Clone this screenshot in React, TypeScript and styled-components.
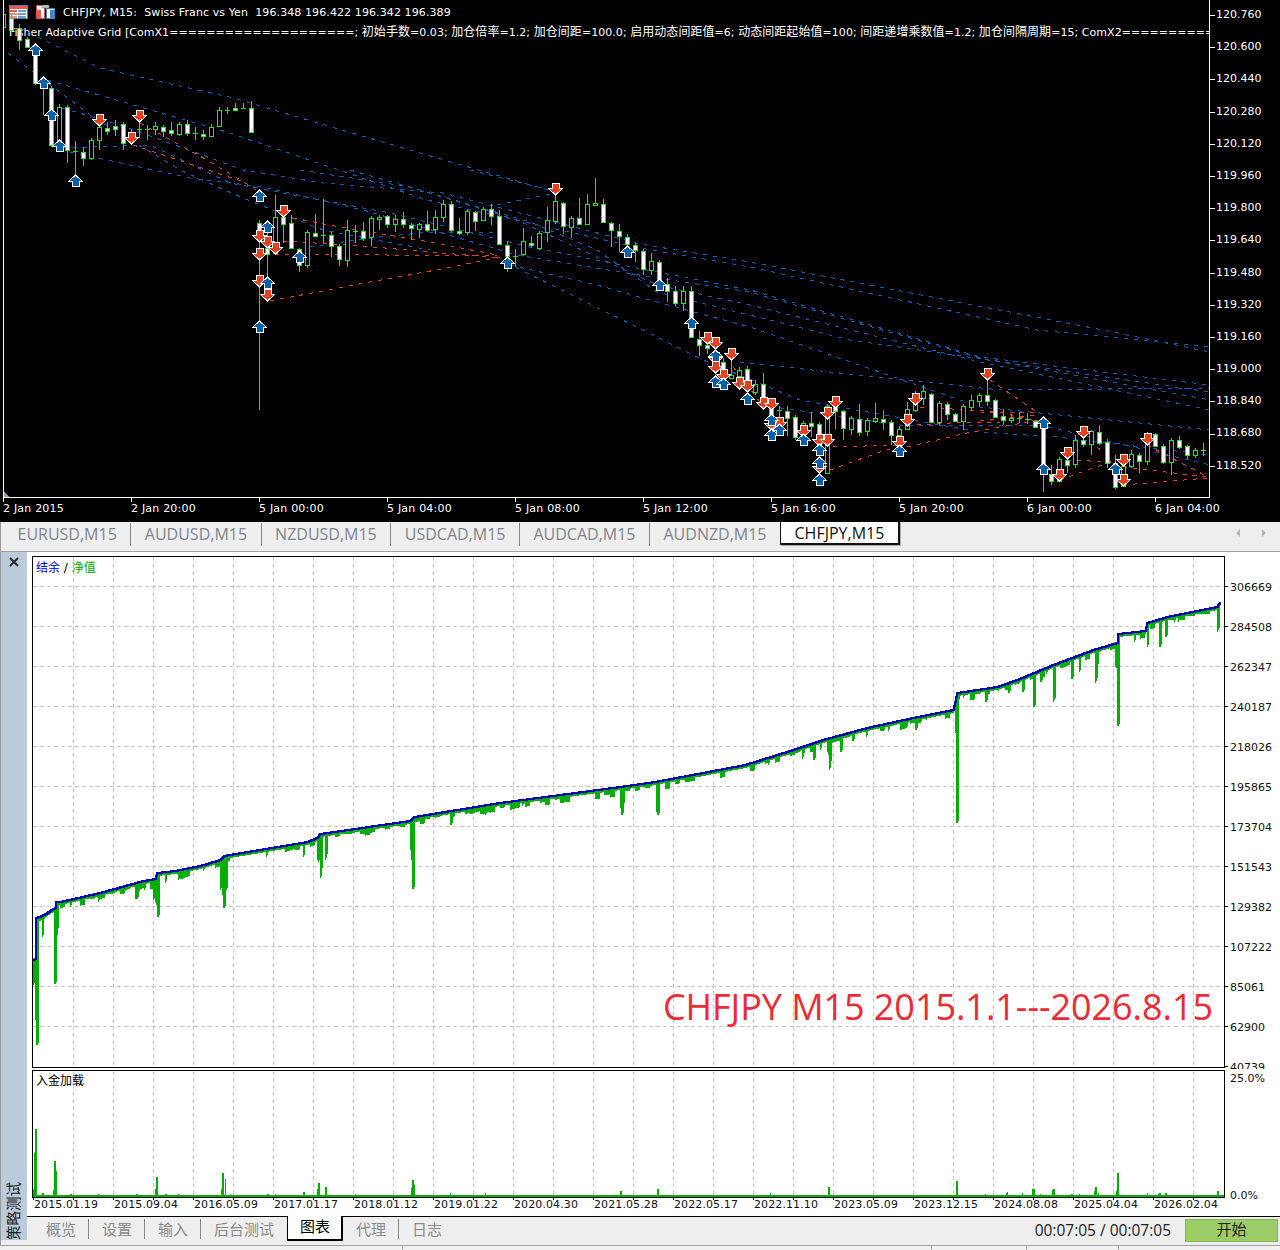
import React from "react";
import styled, { createGlobalStyle } from "styled-components";

const GlobalStyle = createGlobalStyle`
  html, body {
    margin: 0;
    padding: 0;
    background: #fff;
  }
  * {
    box-sizing: border-box;
  }
`;

const UI_FONT = `"DejaVu Sans", "Noto Sans CJK SC", sans-serif`;
const TAB_FONT = `"Open Sans", "Noto Sans CJK SC", sans-serif`;

const Page = styled.div`
  width: 1280px;
  height: 1250px;
  display: flex;
  flex-direction: column;
  overflow: hidden;
  font-family: ${UI_FONT};
`;

/* ---------- price chart ---------- */

const ChartPane = styled.div`
  height: 522px;
  background: #000;
  color: #fff;
  font-size: 11px;
`;

const ChartRow = styled.div`
  display: flex;
  height: 498px;
`;

const Plot = styled.div`
  position: relative;
  margin-left: 3px;
  width: 1207px;
  height: 498px;
  border-left: 1px solid #fff;
  border-right: 1px solid #fff;
  border-bottom: 1px solid #fff;
  overflow: hidden;

  svg {
    position: relative;
    display: block;
  }
`;

const ChartCaption = styled.div`
  position: absolute;
  left: 5px;
  top: 4px;
  white-space: nowrap;
`;

const CaptionTitle = styled.div`
  display: flex;
  align-items: center;
  height: 16px;
  gap: 8px;
  letter-spacing: 0.1px;
  white-space: pre;
`;

const CaptionParams = styled.div`
  margin-top: 4px;
  height: 16px;
  line-height: 16px;
  letter-spacing: 0.05px;
`;

const CjkRun = styled.span`
  font-size: 12px;
`;

const PriceAxis = styled.div`
  flex: 1;
  margin-top: -1px;
  background-image: repeating-linear-gradient(
    to bottom,
    transparent 0 16px,
    #fff 16px 17px,
    transparent 17px 32.2px
  );
  background-size: 5px 100%;
  background-repeat: no-repeat;
`;

const PriceLabel = styled.div`
  height: 32.2px;
  line-height: 32.2px;
  padding-left: 6px;
`;

const TimeAxis = styled.div`
  display: flex;
  height: 24px;
  padding-left: 3px;
  background-image: repeating-linear-gradient(
    to right,
    #fff 0 1px,
    transparent 1px 128px
  );
  background-size: 1207px 4px;
  background-position: 3px 0;
  background-repeat: no-repeat;
`;

const TimeLabel = styled.div`
  width: 128px;
  flex: none;
  line-height: 22px;
  letter-spacing: 0.2px;
`;

/* ---------- symbol tabs ---------- */

const SymbolBar = styled.div`
  height: 30px;
  display: flex;
  align-items: flex-start;
  padding-left: 3px;
  background: #eee;
  border-left: 1px solid #999;
  border-bottom: 1px solid #a3a3a3;
  font-family: ${TAB_FONT};
  font-size: 16px;
`;

const SymbolTab = styled.div<{ $active?: boolean; $last?: boolean }>`
  height: 23px;
  line-height: 23px;
  padding: 0 13.5px;
  color: ${(p) => (p.$active ? "#111" : "#7e858d")};
  white-space: nowrap;
  background: ${(p) => (p.$active ? "#fff" : "transparent")};
  margin-top: ${(p) => (p.$active ? "0" : "1px")};
  border-right: ${(p) =>
    p.$active ? "2px solid #111" : p.$last ? "0" : "1px solid #888"};
  border-left: ${(p) => (p.$active ? "1px solid #111" : "0")};
  border-bottom: ${(p) => (p.$active ? "2px solid #111" : "0")};
  box-shadow: ${(p) => (p.$active ? "1px 1px 0 #aaa" : "none")};
`;

const SymbolSpacer = styled.div`
  flex: 1;
`;

const ScrollArrow = styled.span<{ $dir: "left" | "right" }>`
  width: 0;
  height: 0;
  margin: 7px ${(p) => (p.$dir === "left" ? "22px" : "14px")} 0 0;
  border-top: 4px solid transparent;
  border-bottom: 4px solid transparent;
  ${(p) =>
    p.$dir === "left" ? "border-right: 4px solid #b5b5b5;" : "border-left: 4px solid #b5b5b5;"}
`;

/* ---------- strategy tester ---------- */

const TesterPane = styled.div`
  display: flex;
  height: 694px;
  background: #eee;
  border-left: 1px solid #999;
  border-bottom: 1px solid #a3a3a3;
`;

const SideStrip = styled.div`
  width: 26px;
  margin-bottom: 5px;
  background: #bccbd9;
  display: flex;
  flex-direction: column;
  align-items: center;
  justify-content: space-between;
  padding-top: 5px;
`;

const SideTitle = styled.div`
  writing-mode: vertical-rl;
  text-orientation: sideways;
  transform: rotate(180deg);
  font-size: 14.5px;
  line-height: 16px;
  color: #222;
`;

const TesterMain = styled.div`
  flex: 1;
  display: flex;
  flex-direction: column;
  background: #fff;
  font-size: 11px;
  color: #111;
`;

const GraphRow = styled.div`
  display: flex;
  padding-left: 5px;
`;

const EquityRow = styled(GraphRow)`
  padding-top: 4px;
`;

const LoadRow = styled(GraphRow)`
  margin-top: 1px;
  height: 128px;
  align-items: flex-start;
`;

const GraphFrame = styled.div<{ $height: number }>`
  position: relative;
  width: 1193px;
  height: ${(p) => p.$height}px;
  flex: none;
  border: 1px solid #000;

  svg {
    display: block;
  }
`;

const GraphLegend = styled.div<{ $top: number }>`
  position: absolute;
  left: 3px;
  top: ${(p) => p.$top}px;
  font-size: 12px;
  line-height: 14px;
  color: #000;
`;

const LegendPart = styled.span<{ $color: string }>`
  color: ${(p) => p.$color};
`;

const Watermark = styled.div`
  position: absolute;
  right: 11px;
  top: 428px;
  font-family: "Open Sans", sans-serif;
  font-size: 36px;
  line-height: 44px;
  letter-spacing: -0.05px;
  color: #ee2a35;
  white-space: nowrap;
`;

const EquityAxis = styled.div`
  height: 513px;
  flex: 1;
  padding-top: 12px;
  overflow: hidden;
  background-image: repeating-linear-gradient(
    to bottom,
    transparent 0 30px,
    #000 30px 31px,
    transparent 31px 40px
  );
  background-size: 3px 100%;
  background-repeat: no-repeat;
`;

const EquityLabel = styled.div`
  height: 40px;
  line-height: 40px;
  padding-left: 5px;
`;

const LoadAxis = styled.div`
  flex: 1;
  height: 135px;
  padding-left: 5px;
  display: flex;
  flex-direction: column;
  justify-content: space-between;
  line-height: 18px;
`;

const DateAxis = styled.div`
  display: flex;
  height: 18px;
  padding-left: 7px;
  background-image: repeating-linear-gradient(
    to right,
    #000 0 1px,
    transparent 1px 40px
  );
  background-size: 1191px 2px;
  background-position: 6px 0;
  background-repeat: no-repeat;
`;

const DateLabel = styled.div`
  width: 80px;
  flex: none;
  line-height: 14px;
  letter-spacing: 0.1px;
`;

const TesterBar = styled.div`
  flex: 1;
  display: flex;
  align-items: flex-start;
  padding-left: 6px;
  background: #eee;
  border-top: 1px solid #000;
  font-family: ${TAB_FONT};
  font-size: 15px;
`;

const TesterTab = styled.div<{ $active?: boolean; $noSep?: boolean }>`
  line-height: 20px;
  padding: ${(p) => (p.$active ? "0 11px 0 12px" : "0 12px 0 13px")};
  white-space: nowrap;
  color: ${(p) => (p.$active ? "#000" : "#8a8a8a")};
  background: ${(p) => (p.$active ? "#fff" : "transparent")};
  border-right: ${(p) =>
    p.$active ? "2px solid #000" : p.$noSep ? "1px solid transparent" : "1px solid #888"};
  border-left: ${(p) => (p.$active ? "1px solid #000" : "0")};
  border-bottom: ${(p) => (p.$active ? "2px solid #000" : "0")};
  margin-top: ${(p) => (p.$active ? "-1px" : "2px")};
  height: ${(p) => (p.$active ? "25px" : "20px")};
`;

const BarSpacer = styled.div`
  flex: 1;
`;

const Timer = styled.div`
  margin-top: 3px;
  line-height: 20px;
  color: #222;
  font-size: 15.5px;
`;

const StartButton = styled.button`
  width: 93px;
  height: 23px;
  margin: 2px 2px 0 14px;
  padding: 0 0 3px;
  background: #9ccc65;
  border: 1px solid #86b556;
  color: #222;
  font-family: inherit;
  font-size: 15px;
  line-height: 18px;
`;

const StatusBar = styled.div`
  flex: 1;
  display: flex;
  background: #f0f0f0;
`;

const StatusCell = styled.div<{ $width: number }>`
  width: ${(p) => p.$width}px;
  border-right: 1px solid #aaa;
`;

/* ---------- chart data ---------- */

type Candle = [number, number, number, number, "w" | "h" | "d"];

// high, body top, body bottom, low, kind. x = 3 + 8 * index
const candles: Candle[] = [
  [10, 14, 27, 28, "h"], [14, 18, 30, 32, "w"], [24, 28, 40, 50, "w"], [37, 39, 47, 48, "w"],
  [44, 47, 83, 85, "w"], [80, 84, 85, 115, "d"], [86, 88, 145, 147, "w"], [104, 107, 145, 150, "h"],
  [105, 107, 150, 163, "w"], [141, 151, 152, 175, "d"], [147, 152, 158, 166, "w"], [138, 140, 158, 160, "h"],
  [120, 127, 140, 150, "h"], [122, 128, 131, 135, "w"], [120, 126, 129, 136, "w"], [122, 124, 143, 150, "w"],
  [129, 133, 134, 145, "d"], [120, 129, 130, 138, "d"], [125, 129, 130, 140, "d"], [122, 126, 129, 135, "h"],
  [125, 127, 131, 137, "w"], [122, 130, 133, 136, "w"], [122, 124, 134, 136, "h"], [120, 124, 133, 136, "w"],
  [127, 133, 134, 140, "d"], [130, 134, 136, 140, "w"], [124, 127, 136, 137, "h"], [107, 110, 126, 127, "h"],
  [107, 110, 111, 114, "d"], [103, 108, 110, 110, "w"], [103, 108, 109, 109, "d"], [101, 108, 132, 133, "w"],
  [220, 223, 237, 410, "w"], [228, 248, 254, 300, "w"], [195, 217, 253, 254, "h"], [205, 217, 224, 243, "w"],
  [215, 223, 248, 249, "w"], [248, 249, 265, 272, "w"], [230, 232, 265, 268, "h"], [214, 233, 236, 237, "w"],
  [199, 235, 236, 243, "d"], [232, 235, 246, 257, "w"], [244, 246, 259, 266, "w"], [220, 230, 260, 267, "h"],
  [225, 231, 232, 243, "d"], [222, 231, 238, 241, "w"], [216, 218, 237, 246, "h"], [215, 217, 219, 230, "h"],
  [215, 216, 224, 228, "w"], [215, 219, 224, 232, "h"], [212, 219, 224, 228, "w"], [223, 225, 228, 240, "w"],
  [223, 224, 229, 238, "h"], [211, 224, 230, 232, "w"], [210, 217, 229, 234, "h"], [200, 204, 217, 222, "h"],
  [201, 204, 230, 232, "w"], [218, 231, 233, 235, "w"], [209, 211, 232, 235, "h"], [211, 212, 221, 231, "w"],
  [207, 209, 220, 221, "h"], [204, 209, 216, 225, "w"], [210, 216, 244, 245, "w"], [241, 245, 256, 272, "w"],
  [249, 256, 257, 267, "d"], [228, 241, 254, 256, "h"], [236, 243, 245, 248, "w"], [231, 233, 248, 250, "h"],
  [207, 220, 232, 242, "h"], [190, 201, 221, 224, "h"], [202, 203, 226, 234, "w"], [216, 218, 227, 238, "h"],
  [198, 218, 224, 225, "w"], [194, 204, 224, 225, "h"], [178, 203, 205, 205, "h"], [199, 204, 222, 223, "w"],
  [222, 223, 230, 247, "w"], [224, 231, 236, 252, "w"], [234, 237, 244, 250, "w"], [243, 245, 250, 262, "w"],
  [249, 251, 269, 275, "w"], [253, 261, 270, 275, "h"], [260, 262, 284, 285, "w"], [278, 284, 291, 302, "w"],
  [286, 291, 303, 306, "w"], [286, 291, 303, 311, "h"], [286, 291, 337, 337, "w"], [331, 339, 345, 356, "w"],
  [343, 345, 348, 354, "w"], [345, 352, 358, 372, "w"], [358, 362, 370, 372, "w"], [350, 375, 378, 378, "h"],
  [367, 370, 376, 385, "h"], [366, 369, 381, 391, "w"], [380, 384, 392, 395, "h"], [373, 384, 398, 408, "w"],
  [400, 406, 423, 428, "w"], [406, 410, 411, 422, "d"], [406, 411, 418, 436, "w"], [415, 417, 437, 440, "w"],
  [421, 423, 441, 443, "h"], [412, 423, 426, 437, "w"], [422, 424, 447, 460, "w"], [404, 406, 473, 474, "h"],
  [406, 407, 411, 429, "w"], [410, 411, 428, 440, "w"], [416, 418, 429, 435, "h"], [404, 419, 432, 436, "w"],
  [418, 420, 431, 436, "h"], [403, 418, 421, 423, "h"], [410, 419, 422, 430, "w"], [420, 422, 435, 445, "w"],
  [426, 429, 435, 438, "h"], [402, 409, 429, 430, "h"], [391, 404, 410, 412, "h"], [385, 391, 398, 405, "h"],
  [393, 394, 422, 423, "w"], [401, 403, 422, 425, "h"], [402, 404, 414, 420, "w"], [413, 414, 421, 422, "w"],
  [404, 406, 421, 430, "h"], [395, 400, 407, 410, "h"], [393, 395, 401, 407, "h"], [380, 395, 401, 406, "w"],
  [399, 400, 417, 418, "w"], [409, 416, 420, 425, "w"], [414, 418, 420, 423, "h"], [412, 418, 419, 423, "d"],
  [413, 419, 420, 424, "d"], [420, 421, 427, 428, "w"], [424, 427, 465, 492, "w"], [465, 474, 481, 485, "w"],
  [457, 459, 481, 482, "h"], [458, 460, 465, 473, "w"], [435, 440, 464, 468, "h"], [438, 440, 444, 447, "w"],
  [430, 431, 444, 455, "h"], [425, 432, 443, 445, "w"], [439, 442, 463, 468, "w"], [455, 463, 487, 489, "w"],
  [460, 466, 486, 487, "h"], [450, 454, 466, 468, "h"], [453, 455, 461, 473, "w"], [432, 442, 461, 465, "h"],
  [433, 434, 446, 447, "w"], [444, 446, 462, 464, "w"], [438, 440, 462, 475, "h"], [436, 440, 447, 449, "w"],
  [445, 446, 455, 459, "w"], [448, 450, 455, 458, "h"], [443, 450, 451, 456, "d"],
];

// centre x, centre y
const upArrows: [number, number][] = [
  [35, 50], [43, 83], [51, 115], [59, 146], [75, 181], [259, 196], [267, 227], [299, 257], [267, 283],
  [259, 327], [507, 263], [627, 252], [659, 285], [691, 323], [715, 356], [715, 382], [723, 384],
  [747, 399], [771, 420], [771, 435], [779, 430], [803, 440], [819, 450], [819, 463], [819, 480],
  [899, 451], [1043, 423], [1043, 469], [1115, 469],
];

const downArrows: [number, number][] = [
  [99, 120], [139, 116], [131, 138], [283, 211], [259, 236], [267, 242], [275, 248], [259, 254], [259, 281],
  [267, 295], [555, 189], [707, 338], [715, 343], [731, 354], [715, 358], [715, 367], [723, 375], [739, 383],
  [747, 386], [763, 403], [771, 404], [771, 424], [779, 423], [803, 431], [827, 413], [835, 402], [819, 440],
  [827, 440], [819, 467], [907, 420], [915, 399], [899, 442], [987, 374], [1067, 453], [1059, 475],
  [1083, 432], [1123, 460], [1123, 480], [1147, 439],
];

const blueLines: string[] = [
  "20,28 100,68 233,98 427,155 555,192",
  "47,80 227,132 427,200 640,248 750,267 1037,330 1210,347",
  "8,53 93,117 180,170 243,198 323,230 430,250",
  "62,108 120,125 243,170 323,183 443,193 640,244 750,262 1103,330 1210,352",
  "63,148 150,145 230,183 390,213 530,247 657,272 750,290 980,357 1210,385",
  "70,152 190,178 263,187 363,210 517,255 657,278 750,292 980,358 1210,400",
  "300,170 410,187 517,220 657,285 750,305 980,362 1210,410",
  "350,170 430,193 530,222 597,250 657,292 850,340 1210,392",
  "470,170 550,190",
  "497,205 555,193",
  "510,265 597,285 657,302 750,327 980,407 1210,430",
  "507,263 657,337 703,360 800,400 980,432 1057,437 1210,455",
  "310,247 370,238 430,232 500,232",
  "740,362 830,372 1000,390 1210,388",
  "760,405 900,425 1040,425 1210,465",
];

const redLines: string[] = [
  "140,123 207,160 257,190",
  "133,145 187,163 247,183",
  "293,218 340,227 430,242 497,255",
  "275,254 497,256",
  "270,301 370,282 447,268 500,257",
  "263,240 350,245 500,258",
  "833,447 897,445",
  "830,470 880,452 897,447",
  "907,447 967,433 1000,427 1040,420",
  "917,425 967,422 1000,422",
  "920,407 1000,412 1040,422",
  "990,380 1037,412",
  "980,412 1040,413",
  "980,421 1037,415",
  "1060,480 1107,463 1117,462",
  "1067,460 1113,462",
  "1123,485 1208,478",
  "1123,467 1208,477",
  "1147,445 1208,477",
  "1097,447 1113,460",
  "733,367 760,402",
];

const prices = [
  "120.760", "120.600", "120.440", "120.280", "120.120", "119.960", "119.800", "119.640",
  "119.480", "119.320", "119.160", "119.000", "118.840", "118.680", "118.520",
];

const times = [
  "2 Jan 2015", "2 Jan 20:00", "5 Jan 00:00", "5 Jan 04:00", "5 Jan 08:00",
  "5 Jan 12:00", "5 Jan 16:00", "5 Jan 20:00", "6 Jan 00:00", "6 Jan 04:00",
];

const symbols = ["EURUSD,M15", "AUDUSD,M15", "NZDUSD,M15", "USDCAD,M15", "AUDCAD,M15", "AUDNZD,M15", "CHFJPY,M15"];

const balances = [
  "306669", "284508", "262347", "240187", "218026", "195865", "173704",
  "151543", "129382", "107222", "85061", "62900", "40739",
];

const dates = [
  "2015.01.19", "2015.09.04", "2016.05.09", "2017.01.17", "2018.01.12", "2019.01.22", "2020.04.30",
  "2021.05.28", "2022.05.17", "2022.11.10", "2023.05.09", "2023.12.15", "2024.08.08", "2025.04.04", "2026.02.04",
];

const testerTabs = ["概览", "设置", "输入", "后台测试", "图表", "代理", "日志"];

const EA_PARAMS =
  "Fisher Adaptive Grid [ComX1====================; 初始手数=0.03; 加仓倍率=1.2; 加仓间距=100.0; 启用动态间距值=6; 动态间距起始值=100; 间距递增乘数值=1.2; 加仓间隔周期=15; ComX2================";

const curve: [number, number][] = [
  [33, 960], [35, 959], [36, 918], [42, 916], [55, 908], [56, 902], [60, 902], [100, 893], [143, 881],
  [155, 879], [157, 873], [175, 871], [200, 866], [220, 860], [224, 856], [307, 842], [317, 838], [320, 834],
  [410, 821], [414, 817], [500, 803], [620, 787], [655, 782], [745, 765], [790, 751], [823, 740], [867, 728],
  [913, 718], [953, 710], [957, 693], [997, 687], [1017, 680], [1053, 665], [1093, 650], [1117, 643],
  [1118, 634], [1145, 631], [1147, 623], [1167, 617], [1217, 607], [1220, 602],
];

const curveY = (x: number) => {
  for (let i = 1; i < curve.length; i++) {
    const [x1, y1] = curve[i];
    if (x <= x1) {
      const [x0, y0] = curve[i - 1];
      return Math.round(y0 + ((y1 - y0) * (x - x0)) / (x1 - x0));
    }
  }
  return curve[curve.length - 1][1];
};

// x, lowest y of the equity dip
const dips: [number, number][] = [
  [33, 985], [34, 970], [35, 1020], [36, 1045], [37, 1045], [39, 921], [42, 937], [54, 984], [55, 984], [56, 937], [57, 930],
  [70, 907], [98, 902], [135, 899], [136, 899], [137, 899], [144, 890], [153, 900], [155, 902], [156, 905], [157, 917], [158, 917],
  [165, 883], [178, 880], [203, 871], [220, 890], [222, 895], [223, 908], [224, 908], [226, 890],
  [266, 857], [303, 857], [317, 860], [318, 862], [320, 878], [321, 870], [325, 860], [326, 856],
  [410, 850], [411, 860], [412, 889], [413, 889], [450, 825], [451, 825], [485, 815], [522, 806], [547, 804],
  [604, 795], [620, 808], [621, 815], [622, 815], [623, 805], [656, 812], [657, 815], [658, 815], [690, 778], [768, 765],
  [802, 759], [803, 755], [813, 760], [814, 760], [820, 750], [827, 752], [828, 755], [829, 770], [830, 763], [840, 752], [841, 752],
  [852, 741], [853, 741], [866, 737], [888, 731], [905, 728], [906, 728], [915, 730], [916, 730], [920, 723], [926, 720],
  [955, 733], [956, 823], [957, 823], [963, 698], [985, 702], [986, 702], [998, 691], [1008, 693], [1009, 693],
  [1022, 692], [1023, 692], [1033, 707], [1034, 707], [1040, 682], [1041, 682], [1046, 674], [1053, 702], [1054, 700],
  [1071, 679], [1072, 679], [1079, 672], [1095, 683], [1096, 680], [1097, 666], [1115, 667], [1116, 668], [1117, 726], [1118, 726],
  [1134, 642], [1147, 647], [1159, 647], [1160, 647], [1165, 637], [1166, 637], [1174, 622], [1178, 622], [1184, 618], [1200, 614],
  [1217, 632], [1218, 630],
];

const loadBars: [number, number][] = [
  [33, 1188], [34, 1152], [35, 1128], [36, 1128], [42, 1192], [43, 1192], [53, 1189], [54, 1160], [55, 1160], [56, 1170],
  [70, 1193], [71, 1193], [98, 1193], [136, 1193], [137, 1193], [155, 1188], [156, 1176], [157, 1176], [165, 1193], [166, 1193],
  [178, 1193], [221, 1188], [222, 1172], [223, 1172], [225, 1178], [230, 1193], [267, 1193], [268, 1193], [275, 1193],
  [303, 1191], [304, 1191], [317, 1188], [318, 1182], [319, 1182], [325, 1186], [326, 1186], [355, 1193], [411, 1187],
  [412, 1179], [413, 1179], [414, 1184], [450, 1192], [485, 1192], [620, 1190], [621, 1190], [657, 1188], [658, 1188],
  [770, 1192], [828, 1186], [829, 1186], [956, 1180], [957, 1180], [985, 1193], [1006, 1192], [1007, 1191], [1022, 1192],
  [1032, 1188], [1033, 1188], [1034, 1188], [1040, 1193], [1052, 1189], [1053, 1188], [1054, 1188], [1071, 1193], [1072, 1193],
  [1079, 1193], [1094, 1190], [1095, 1186], [1096, 1186], [1098, 1192], [1116, 1190], [1117, 1172], [1118, 1172], [1147, 1192],
  [1158, 1193], [1159, 1192], [1160, 1192], [1165, 1192], [1166, 1192], [1217, 1190], [1218, 1190],
];

const buildEquityPath = () => {
  let d = `M33 ${curveY(33)}`;
  for (let x = 34; x <= 1220; x++) d += `H${x}V${curveY(x)}`;
  return d;
};

const noise = (n: number) => Math.abs(Math.sin(n * 12.9898) * 43758.5453) % 1;

const buildDrawdownPath = () => {
  const deep = new Map(dips);
  let d = "";
  for (let x = 33; x <= 1219; x++) {
    const top = curveY(x);
    const block = noise(Math.floor(x / 5));
    // runs of shallow dips a few pixels wide under the curve
    const shallow = top + 3 + (block > 0.6 ? (block - 0.58) * 14 : 0);
    const bottom = Math.max(shallow, deep.get(x) ?? 0, (deep.get(x - 1) ?? 0) - 2);
    d += `M${x + 0.5} ${top}V${Math.round(bottom)}`;
  }
  return d;
};

const range = (from: number, to: number, step: number) => {
  const out: number[] = [];
  for (let v = from; v <= to; v += step) out.push(v);
  return out;
};

/* ---------- drawings ---------- */

const ArrowMark = ({ x, y, up }: { x: number; y: number; up: boolean }) => (
  <polygon
    transform={`translate(${x + 0.5} ${y}) scale(1 ${up ? 1 : -1})`}
    points="0,-6 7,0.5 3.5,0.5 3.5,5.5 -3.5,5.5 -3.5,0.5 -7,0.5"
    fill={up ? "#0b5fa9" : "#e2421f"}
    stroke="#fff"
    strokeWidth="1"
  />
);

const PriceChart = () => (
  <svg width="1205" height="497" viewBox="4 0 1205 497" shapeRendering="crispEdges">
    {blueLines.map((points) => (
      <polyline key={points} points={points} fill="none" stroke="#0b5fb8" strokeDasharray="4 6" />
    ))}
    {redLines.map((points) => (
      <polyline key={points} points={points} fill="none" stroke="#e2421f" strokeDasharray="4 6" />
    ))}
    {candles.map(([hi, top, bot, lo, kind], i) => {
      const x = 3 + 8 * i;
      return (
        <g key={x}>
          <line x1={x + 0.5} x2={x + 0.5} y1={hi} y2={lo} stroke="#0f0" />
          {kind === "d" ? (
            <line x1={x - 2} x2={x + 3} y1={top + 0.5} y2={top + 0.5} stroke="#0f0" />
          ) : (
            <rect
              x={x - 1.5}
              y={top + 0.5}
              width={4}
              height={bot - top}
              fill={kind === "w" ? "#fff" : "#000"}
              stroke="#0f0"
            />
          )}
        </g>
      );
    })}
    {downArrows.map(([x, y]) => (
      <ArrowMark key={`d${x}-${y}`} x={x} y={y} up={false} />
    ))}
    {upArrows.map(([x, y]) => (
      <ArrowMark key={`u${x}-${y}`} x={x} y={y} up />
    ))}
    <polygon points="4,492 9,497 4,497" fill="#8f9fb2" />
  </svg>
);

const TemplateIcon = () => (
  <svg width="19" height="14" viewBox="0 0 19 14">
    <rect x="0.5" y="0.5" width="18" height="13" fill="#fff" stroke="#5d83a6" />
    <rect x="1" y="1" width="17" height="3" fill="#e9584c" />
    <rect x="1" y="5" width="7" height="2" fill="#e9584c" />
    <rect x="1" y="8" width="7" height="2" fill="#f08a80" />
    <rect x="1" y="11" width="7" height="2" fill="#f08a80" />
    <rect x="9" y="5" width="8" height="2" fill="#6fa0cc" />
    <rect x="9" y="8" width="8" height="2" fill="#6fa0cc" />
    <rect x="9" y="11" width="8" height="2" fill="#6fa0cc" />
  </svg>
);

const ProfileIcon = () => (
  <svg width="19" height="14" viewBox="0 0 19 14">
    <rect x="0.5" y="0.5" width="8" height="13" fill="#fff" stroke="#d9534a" />
    <rect x="1" y="5" width="4" height="8" fill="#e9584c" />
    <rect x="10.5" y="3.5" width="8" height="10" fill="#fff" stroke="#3f86c6" />
    <rect x="14" y="5" width="4" height="8" fill="#3f86c6" />
    <rect x="6" y="0" width="7" height="3" fill="#c9c9c9" stroke="#777" strokeWidth="0.6" />
  </svg>
);

const CloseIcon = () => (
  <svg width="10" height="10" viewBox="0 0 10 10">
    <path d="M1 1L9 9M9 1L1 9" stroke="#2b2b2b" strokeWidth="2" fill="none" />
  </svg>
);

const EquityChart = () => (
  <svg width="1191" height="510" viewBox="33 557 1191 510" shapeRendering="crispEdges">
    {range(73, 1193, 40).map((x) => (
      <line key={x} x1={x + 0.5} x2={x + 0.5} y1={557} y2={1067} stroke="#c8c8c8" strokeDasharray="4 3" />
    ))}
    {range(586, 1026, 40).map((y) => (
      <line key={y} x1={33} x2={1224} y1={y + 0.5} y2={y + 0.5} stroke="#c8c8c8" strokeDasharray="4 3" />
    ))}
    <path d={buildDrawdownPath()} stroke="#05ae05" fill="none" />
    <path d={buildEquityPath()} stroke="#0808b0" strokeWidth="2.6" fill="none" />
  </svg>
);

const LoadChart = () => (
  <svg width="1191" height="126" viewBox="33 1070 1191 126" shapeRendering="crispEdges">
    {range(73, 1193, 40).map((x) => (
      <line key={x} x1={x + 0.5} x2={x + 0.5} y1={1070} y2={1196} stroke="#c8c8c8" strokeDasharray="4 3" />
    ))}
    {loadBars.map(([x, y]) => (
      <line key={x} x1={x + 0.5} x2={x + 0.5} y1={y} y2={1195} stroke="#05ae05" />
    ))}
    <rect x="33" y="1194" width="1191" height="2" fill="#05ae05" />
  </svg>
);

/* ---------- page ---------- */

function App() {
  return (
    <Page>
      <GlobalStyle />
      <ChartPane>
        <ChartRow>
          <Plot>
            <ChartCaption>
              <CaptionTitle>
                <TemplateIcon />
                <ProfileIcon />
                {"CHFJPY, M15:  Swiss Franc vs Yen  196.348 196.422 196.342 196.389"}
              </CaptionTitle>
              <CaptionParams>
                {EA_PARAMS.split(/([\u4e00-\u9fff]+)/).map((part, i) =>
                  i % 2 ? <CjkRun key={i}>{part}</CjkRun> : part,
                )}
              </CaptionParams>
            </ChartCaption>
            <PriceChart />
          </Plot>
          <PriceAxis>
            {prices.map((p) => (
              <PriceLabel key={p}>{p}</PriceLabel>
            ))}
          </PriceAxis>
        </ChartRow>
        <TimeAxis>
          {times.map((t) => (
            <TimeLabel key={t}>{t}</TimeLabel>
          ))}
        </TimeAxis>
      </ChartPane>

      <SymbolBar>
        {symbols.map((s, i) => (
          <SymbolTab key={s} $active={i === 6} $last={i === 5}>
            {s}
          </SymbolTab>
        ))}
        <SymbolSpacer />
        <ScrollArrow $dir="left" />
        <ScrollArrow $dir="right" />
      </SymbolBar>

      <TesterPane>
        <SideStrip>
          <CloseIcon />
          <SideTitle>策略测试</SideTitle>
        </SideStrip>
        <TesterMain>
          <EquityRow>
            <GraphFrame $height={512}>
              <EquityChart />
              <GraphLegend $top={4}>
                <LegendPart $color="#0000c8">结余</LegendPart> / <LegendPart $color="#00aa00">净值</LegendPart>
              </GraphLegend>
              <Watermark>CHFJPY M15 2015.1.1---2026.8.15</Watermark>
            </GraphFrame>
            <EquityAxis>
              {balances.map((b) => (
                <EquityLabel key={b}>{b}</EquityLabel>
              ))}
            </EquityAxis>
          </EquityRow>
          <LoadRow>
            <GraphFrame $height={128}>
              <LoadChart />
              <GraphLegend $top={3}>入金加载</GraphLegend>
            </GraphFrame>
            <LoadAxis>
              <div>25.0%</div>
              <div>0.0%</div>
            </LoadAxis>
          </LoadRow>
          <DateAxis>
            {dates.map((d) => (
              <DateLabel key={d}>{d}</DateLabel>
            ))}
          </DateAxis>
          <TesterBar>
            {testerTabs.map((t, i) => (
              <TesterTab key={t} $active={t === "图表"} $noSep={i === 3 || i === 6}>
                {t}
              </TesterTab>
            ))}
            <BarSpacer />
            <Timer>00:07:05 / 00:07:05</Timer>
            <StartButton>开始</StartButton>
          </TesterBar>
        </TesterMain>
      </TesterPane>
      <StatusBar>
        <StatusCell $width={403} />
        <StatusCell $width={529} />
        <StatusCell $width={95} />
        <StatusCell $width={92} />
      </StatusBar>
    </Page>
  );
}

export default App;
